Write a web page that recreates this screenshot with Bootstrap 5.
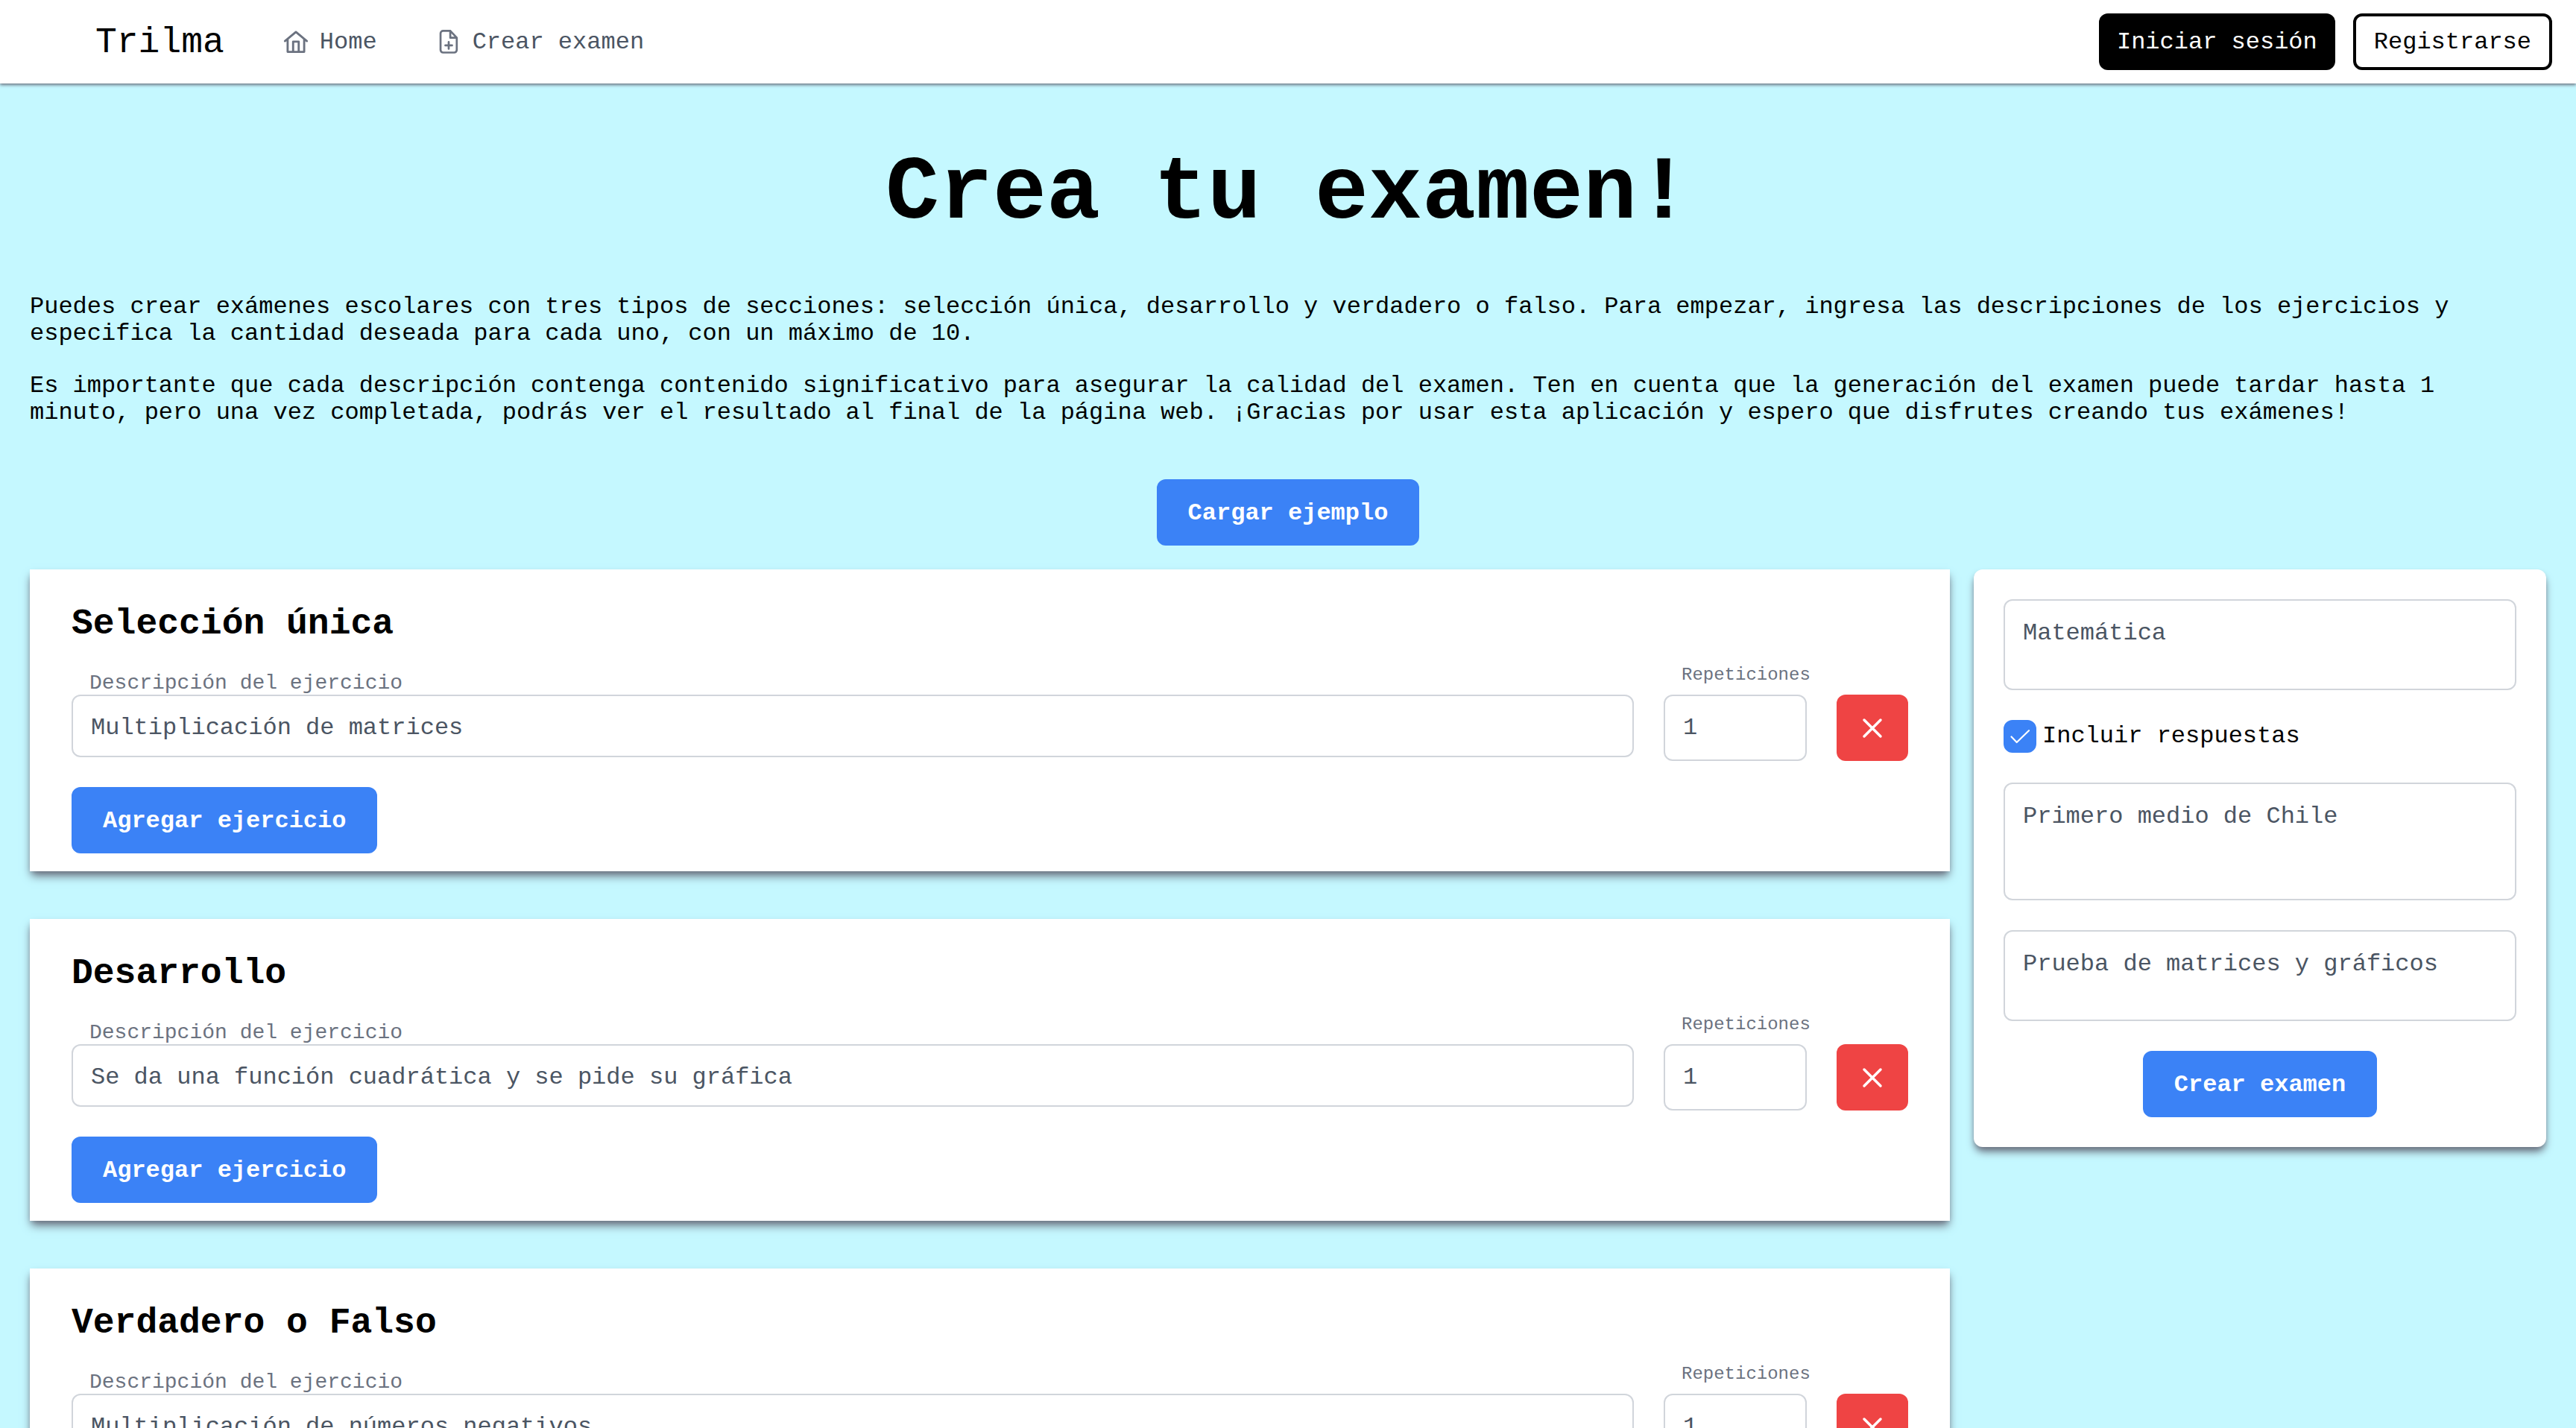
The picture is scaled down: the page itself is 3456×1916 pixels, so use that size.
<!DOCTYPE html>
<html lang="es">
<head>
<meta charset="utf-8">
<meta name="viewport" content="width=device-width, initial-scale=1">
<title>Trilma</title>
<link href="https://cdn.jsdelivr.net/npm/bootstrap@5.3.0/dist/css/bootstrap.min.css" rel="stylesheet">
<style>
  body { font-family: "Liberation Mono", "Courier New", monospace; font-size: 32px; line-height: 36px; color: #000; background: #c5f8ff; }
  .topbar { padding: 18px 32px 18px 128px; background: #fff; box-shadow: 0 2px 4px 0 #6b7280; }
  .topnav { padding-top: 2px; }
  .brand-name { font-size: 48px; line-height: 54px; margin-right: 78px; color: #000; text-decoration: none; }
  .menu-link { gap: 14px; color: #4b5563; text-decoration: none; }
  .menu-link svg { width: 36px; height: 36px; color: #6b7280; }
  .menu { gap: 78px; }
  .auth { gap: 24px; }
  .auth-btn { font: inherit; padding: 21px 24px 19px; border: 0; border-radius: 12px; background: #000; color: #fff; }
  .auth-btn-line { padding: 17px 24px 15px; border: 4px solid #000; background: #fff; color: #000; }
  .page { padding: 80px 40px 0; }
  .hero-title { font-size: 120px; line-height: 136px; font-weight: 700; margin: 0 0 66px; }
  .intro { margin: 0 0 34px; }
  .action { font: inherit; line-height: 37px; font-weight: 700; color: #fff; background: #3b82f6; padding: 25px 40px 23px; border: 2px solid #3b82f6; border-radius: 12px; }
  .load-row { margin: 71px 0 32px; }
  .columns { gap: 32px; }
  .sections { gap: 64px; padding-bottom: 64px; }
  .panel { background: #fff; box-shadow: 0 8px 12px -2px #6b7280, 0 4px 8px -4px #6b7280; }
  .section-panel { padding: 46px 56px 24px; }
  .section-title { font-size: 48px; line-height: 54px; font-weight: 700; margin: 0 0 23px; }
  .exercise { gap: 40px; margin-bottom: 35px; }
  .field-box { font: inherit; line-height: 37px; color: #4b5563; background: #fff; border: 2px solid #d1d5db; border-radius: 12px; padding: 24px; width: 100%; display: block; resize: none; overflow: hidden; }
  .desc-box { height: 84px; }
  .reps { width: 192px; }
  .reps-box { height: 89px; }
  .desc-label { font-size: 28px; line-height: 30px; margin: 15px 0 0 24px; color: #6b7280; display: block; }
  .reps-label { font-size: 24px; line-height: 28px; margin: 5px 0 12px 24px; color: #6b7280; display: block; }
  .remove { width: 96px; height: 89px; border: 0; border-radius: 12px; background: #ef4444; color: #fff; }
  .remove svg { width: 44px; height: 44px; }
  .settings { width: 768px; padding: 40px; gap: 40px; border-radius: 12px; }
  .settings .field-box { padding-top: 25px; }
  .short-box { height: 122px; }
  .tall-box { height: 158px; }
  .answers { gap: 8px; }
  .tick { appearance: none; width: 44px; height: 44px; margin: 0; border-radius: 12px; border: 2px solid #d1d5db; background: #fff; }
  .tick:checked { border-color: #3b82f6; background: #3b82f6; }
  .tick-wrap { width: 44px; height: 44px; }
  .tick-wrap svg { width: 44px; height: 44px; left: 0; top: 0; color: #fff; pointer-events: none; }
</style>
<script src="https://cdn.jsdelivr.net/npm/bootstrap@5.3.0/dist/js/bootstrap.bundle.min.js"></script>
</head>
<body>
<svg class="d-none" aria-hidden="true">
  <symbol id="i-x" viewBox="0 0 24 24"><path d="M6 18 18 6M6 6l12 12" fill="none" stroke="currentColor" stroke-width="1.9" stroke-linecap="round" stroke-linejoin="round"/></symbol>
</svg>
<header class="topbar d-flex align-items-center justify-content-between position-relative">
  <nav class="topnav d-flex align-items-center">
    <a class="brand-name" href="#">Trilma</a>
    <div class="menu d-flex">
      <a class="menu-link d-flex align-items-center" href="#"><svg viewBox="0 0 24 24" fill="none" stroke="currentColor" stroke-width="1.9" stroke-linejoin="round" stroke-linecap="round"><path d="M2.2 10.7 12 2.6l9.8 8.1M4.6 9.2v11.2h14.8V9.2M9.5 20.4v-9.2h5v9.2"/></svg>Home</a>
      <a class="menu-link d-flex align-items-center" href="#crear"><svg viewBox="0 0 24 24" fill="none" stroke="currentColor" stroke-width="1.8" stroke-linejoin="round" stroke-linecap="round"><path d="M13.4 1.6H7a2.3 2.3 0 0 0-2.3 2.3v14.8A2.3 2.3 0 0 0 7 21h9.9a2.3 2.3 0 0 0 2.3-2.3V7.8zM13.4 1.6v6.2h5.8M12 11.6v6M9 14.6h6"/></svg>Crear examen</a>
    </div>
  </nav>
  <div class="auth d-flex">
    <button class="auth-btn" type="button">Iniciar sesión</button>
    <button class="auth-btn auth-btn-line" type="button">Registrarse</button>
  </div>
</header>
<main class="page">
  <h1 class="hero-title text-center">Crea tu examen!</h1>
  <p class="intro">Puedes crear exámenes escolares con tres tipos de secciones: selección única, desarrollo y verdadero o falso. Para empezar, ingresa las descripciones de los ejercicios y especifica la cantidad deseada para cada uno, con un máximo de 10.</p>
  <p class="intro">Es importante que cada descripción contenga contenido significativo para asegurar la calidad del examen. Ten en cuenta que la generación del examen puede tardar hasta 1 minuto, pero una vez completada, podrás ver el resultado al final de la página web. ¡Gracias por usar esta aplicación y espero que disfrutes creando tus exámenes!</p>
  <div class="load-row text-center d-flex justify-content-center"><button class="action" type="button">Cargar ejemplo</button></div>
  <form class="columns d-flex align-items-start" id="crear">
    <div class="sections d-flex flex-column flex-grow-1">
      <section class="panel section-panel">
        <h2 class="section-title">Selección única</h2>
        <div class="exercise d-flex align-items-start">
          <div class="flex-grow-1"><label class="desc-label" for="d1">Descripción del ejercicio</label><textarea class="field-box desc-box" id="d1" rows="1">Multiplicación de matrices</textarea></div>
          <div class="reps"><label class="reps-label" for="r1">Repeticiones</label><input class="field-box reps-box" id="r1" type="text" inputmode="numeric" value="1"></div>
          <button class="remove align-self-end d-flex align-items-center justify-content-center" type="button" aria-label="Eliminar"><svg><use href="#i-x"/></svg></button>
        </div>
        <button class="action" type="button">Agregar ejercicio</button>
      </section>
      <section class="panel section-panel">
        <h2 class="section-title">Desarrollo</h2>
        <div class="exercise d-flex align-items-start">
          <div class="flex-grow-1"><label class="desc-label" for="d2">Descripción del ejercicio</label><textarea class="field-box desc-box" id="d2" rows="1">Se da una función cuadrática y se pide su gráfica</textarea></div>
          <div class="reps"><label class="reps-label" for="r2">Repeticiones</label><input class="field-box reps-box" id="r2" type="text" inputmode="numeric" value="1"></div>
          <button class="remove align-self-end d-flex align-items-center justify-content-center" type="button" aria-label="Eliminar"><svg><use href="#i-x"/></svg></button>
        </div>
        <button class="action" type="button">Agregar ejercicio</button>
      </section>
      <section class="panel section-panel">
        <h2 class="section-title">Verdadero o Falso</h2>
        <div class="exercise d-flex align-items-start">
          <div class="flex-grow-1"><label class="desc-label" for="d3">Descripción del ejercicio</label><textarea class="field-box desc-box" id="d3" rows="1">Multiplicación de números negativos</textarea></div>
          <div class="reps"><label class="reps-label" for="r3">Repeticiones</label><input class="field-box reps-box" id="r3" type="text" inputmode="numeric" value="1"></div>
          <button class="remove align-self-end d-flex align-items-center justify-content-center" type="button" aria-label="Eliminar"><svg><use href="#i-x"/></svg></button>
        </div>
        <button class="action" type="button">Agregar ejercicio</button>
      </section>
    </div>
    <aside class="panel settings d-flex flex-column flex-shrink-0">
      <textarea class="field-box short-box" aria-label="Asignatura">Matemática</textarea>
      <div class="answers d-flex align-items-center">
        <span class="tick-wrap position-relative d-block"><input class="tick d-block" type="checkbox" id="resp" checked><svg class="position-absolute" viewBox="0 0 44 44" fill="none" stroke="currentColor" stroke-width="2.2" stroke-linecap="round" stroke-linejoin="round"><path d="M10.5 22.5 17.7 30 34 14.2"/></svg></span>
        <label for="resp">Incluir respuestas</label>
      </div>
      <textarea class="field-box tall-box" aria-label="Nivel">Primero medio de Chile</textarea>
      <textarea class="field-box short-box" aria-label="Título">Prueba de matrices y gráficos</textarea>
      <button class="action align-self-center" type="submit">Crear examen</button>
    </aside>
  </form>
</main>
</body>
</html>
